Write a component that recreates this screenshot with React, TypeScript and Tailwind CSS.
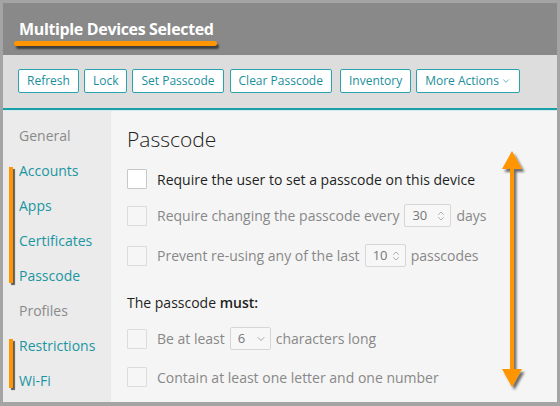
import { ChevronDown, ChevronsUpDown } from 'lucide-react';

const font = { fontFamily: '"Open Sans", "Liberation Sans", sans-serif' };

function ToolButton({ label, caret }: { label: string; caret?: boolean }) {
  return (
    <button className="h-[24px] px-[8px] flex items-center gap-[2px] bg-white border border-[#2aa5ae] rounded-[2px] text-[12px] text-[#1a8f9a] leading-none">
      {label}
      {caret && <ChevronDown className="w-[10px] h-[10px]" strokeWidth={1.5} />}
    </button>
  );
}

function Box({ active }: { active?: boolean }) {
  return (
    <span
      className={
        active
          ? 'w-[20px] h-[20px] shrink-0 bg-white border border-[#c8c8c8] rounded-[1px]'
          : 'w-[20px] h-[20px] shrink-0 bg-[#f6f6f6] border border-[#dcdcdc] rounded-[1px]'
      }
    />
  );
}

function NumInput({ value, width, select }: { value: string; width: string; select?: boolean }) {
  return (
    <span
      className={`${width} h-[23px] mx-[5px] pl-[7px] pr-[3px] flex items-center justify-between border border-[#d6d6d6] rounded-[2px] bg-[#f7f7f7] text-[13px] text-[#777]`}
    >
      {value}
      {select ? (
        <ChevronDown className="w-[12px] h-[12px] text-[#888]" strokeWidth={1.5} />
      ) : (
        <ChevronsUpDown className="w-[12px] h-[16px] text-[#888]" strokeWidth={1.3} />
      )}
    </span>
  );
}

export default function App() {
  const nav = [
    { label: 'General', header: true },
    { label: 'Accounts' },
    { label: 'Apps' },
    { label: 'Certificates' },
    { label: 'Passcode' },
    { label: 'Profiles', header: true },
    { label: 'Restrictions' },
    { label: 'Wi-Fi' },
  ];

  return (
    <div className="w-[560px] h-[406px] bg-[#a4a4a4] p-[3px] pb-[4px] overflow-hidden" style={font}>
      <div className="relative w-full h-full flex flex-col bg-[#f5f5f5] overflow-hidden">
        {/* header */}
        <div className="h-[52px] shrink-0 bg-[#898989] pl-[16px] pt-[14px]">
          <div className="relative inline-block">
            <span className="text-[16px] font-bold text-white tracking-[-0.35px]">Multiple Devices Selected</span>
            <span className="absolute left-[-5px] right-[-3px] top-[24px] h-[5px] rounded-full bg-[#ff9500] shadow-[2px_3px_2px_rgba(0,0,0,0.55)]" />
          </div>
        </div>

        {/* toolbar */}
        <div className="h-[55px] shrink-0 bg-[#dddddd] flex items-center gap-[5px] pl-[15px] pb-[1px] border-b-2 border-[#1a9ea9]">
          <ToolButton label="Refresh" />
          <ToolButton label="Lock" />
          <ToolButton label="Set Passcode" />
          <div className="ml-[1px]">
            <ToolButton label="Clear Passcode" />
          </div>
          <div className="ml-[3px]">
            <ToolButton label="Inventory" />
          </div>
          <ToolButton label="More Actions" caret />
        </div>
        <div className="h-px bg-[#d3ebee] shrink-0" />

        <div className="flex flex-1 min-h-0">
          {/* sidebar */}
          <div className="relative w-[108px] shrink-0 bg-[#ebebeb] pt-[7px] pl-[16px]">
            {nav.map((n) => (
              <div
                key={n.label}
                className={`h-[35px] flex items-center text-[14px] ${n.header ? 'text-[#8a8a8a]' : 'text-[#1a96a2]'}`}
              >
                {n.label}
              </div>
            ))}
            <span className="absolute left-[6px] top-[56px] w-[4px] h-[116px] bg-[#ff9500] shadow-[2px_2px_1px_rgba(0,0,0,0.6)]" />
            <span className="absolute left-[6px] top-[228px] w-[4px] h-[49px] bg-[#ff9500] shadow-[2px_2px_1px_rgba(0,0,0,0.6)]" />
          </div>

          {/* content */}
          <div className="relative flex-1 pl-[16px] pt-[14px] text-[14px]">
            <div className="text-[21px] font-light text-[#222] leading-[28px]">Passcode</div>

            <div className="mt-[16px] flex items-center h-[20px]">
              <Box active />
              <span className="ml-[10px] text-[#1f1f1f]">Require the user to set a passcode on this device</span>
            </div>

            <div className="mt-[15px] flex items-center h-[23px] text-[#888]">
              <Box />
              <span className="ml-[10px]">Require changing the passcode every</span>
              <NumInput value="30" width="w-[47px]" />
              <span>days</span>
            </div>

            <div className="mt-[17px] flex items-center h-[23px] text-[#888]">
              <Box />
              <span className="ml-[10px]">Prevent re-using any of the last</span>
              <NumInput value="10" width="w-[41px]" />
              <span>passcodes</span>
            </div>

            <div className="mt-[25px] h-[20px] flex items-center text-[#1f1f1f]">
              The passcode&nbsp;<span className="font-semibold">must:</span>
            </div>

            <div className="mt-[15px] flex items-center h-[23px] text-[#888]">
              <Box />
              <span className="ml-[10px]">Be at least</span>
              <NumInput value="6" width="w-[41px]" select />
              <span>characters long</span>
            </div>

            <div className="mt-[17px] flex items-center h-[20px] text-[#888]">
              <Box />
              <span className="ml-[10px]">Contain at least one letter and one number</span>
            </div>

            {/* double arrow annotation */}
            <svg
              className="absolute left-[388px] top-[38px]"
              width="30"
              height="246"
              viewBox="0 0 30 246"
            >
              <defs>
                <filter id="sh" x="-50%" y="-10%" width="200%" height="120%">
                  <feDropShadow dx="2.5" dy="3" stdDeviation="1.2" floodColor="#000" floodOpacity="0.55" />
                </filter>
              </defs>
              <g filter="url(#sh)" fill="#ff9500">
                <polygon points="13,2 3,20 23,20" />
                <rect x="11" y="19" width="4" height="206" />
                <polygon points="13,238 3,220 23,220" />
              </g>
            </svg>
          </div>
        </div>
      </div>
    </div>
  );
}
